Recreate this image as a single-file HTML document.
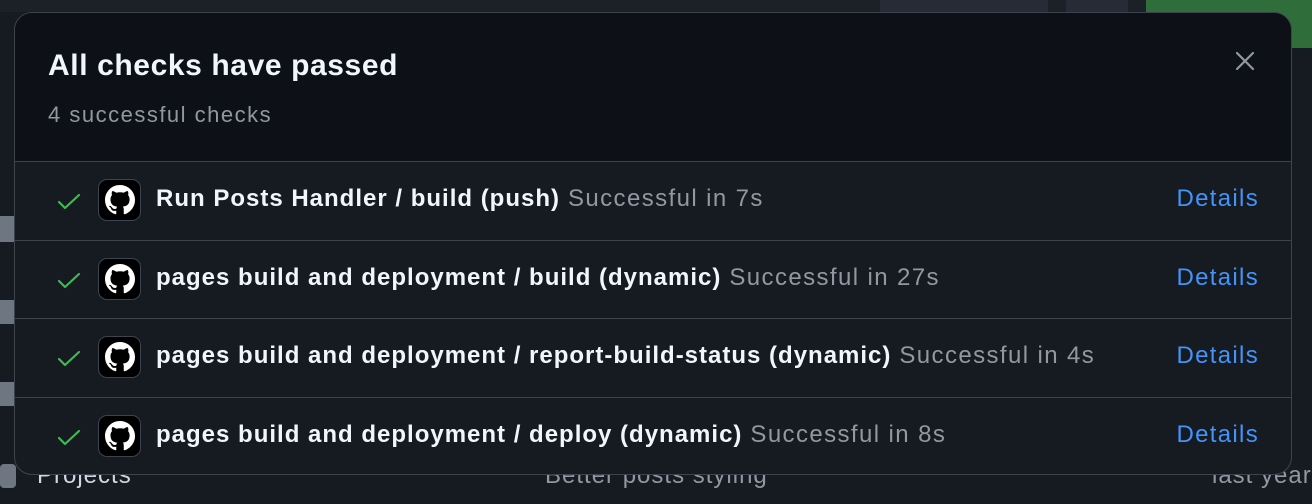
<!DOCTYPE html>
<html><head><meta charset="utf-8"><style>
*{margin:0;padding:0;box-sizing:border-box}
body{width:1312px;height:504px;overflow:hidden;background:#161b22;font-family:"Liberation Sans",sans-serif;position:relative}
.bg{position:absolute;letter-spacing:1px;white-space:nowrap}
.modal{position:absolute;left:14px;top:12px;width:1278px;height:463px;border:1.5px solid #3d444d;border-radius:18px;overflow:hidden;background:#161b22}
.head{height:149px;background:#0d1117;border-bottom:1.5px solid #3d444d;position:relative}
.title{position:absolute;left:33px;top:36px;font-size:30px;font-weight:bold;color:#f0f6fc;letter-spacing:0.6px}
.sub{position:absolute;left:33px;top:89px;font-size:22px;color:#9198a1;letter-spacing:1.5px}
.x{position:absolute;left:1220px;top:38px}
.row{height:78.5px;border-bottom:1.5px solid #3d444d;position:relative;font-size:24px}
.row:last-child{border-bottom:none}
.chk{position:absolute;left:41px;top:29px}
.ic{position:absolute;left:83px;top:17px;width:43px;height:42px;background:#000;border:1.5px solid #3d444d;border-radius:9px;display:flex;align-items:center;justify-content:center}
.nm{position:absolute;left:141px;top:23px;color:#f0f6fc;font-weight:bold;white-space:nowrap;letter-spacing:1px}
.nm span{color:#9198a1;font-weight:normal;margin-left:8px;letter-spacing:1.4px}
.det{position:absolute;right:32px;top:23px;color:#4493f8;letter-spacing:1.3px}
</style></head><body>
<div class="bg" style="left:0;top:0;width:1312px;height:12px;background:#1c2128"></div>
<div class="bg" style="left:880px;top:0;width:168px;height:12px;background:#262c36"></div>
<div class="bg" style="left:1066px;top:0;width:62px;height:12px;background:#262c36"></div>
<div class="bg" style="left:1146px;top:0;width:166px;height:48px;background:#2f6d3a"></div>
<div class="bg" style="left:0;top:216px;width:14px;height:26px;background:#6e7681"></div>
<div class="bg" style="left:0;top:300px;width:14px;height:24px;background:#6e7681"></div>
<div class="bg" style="left:0;top:382px;width:14px;height:24px;background:#6e7681"></div>
<div class="bg" style="left:0;top:464px;width:16px;height:24px;background:#6e7681;border-radius:4px"></div>
<div class="bg" style="left:37px;top:462px;font-size:24px;color:#d1d7e0">Projects</div>
<div class="bg" style="left:545px;top:462px;font-size:24px;color:#9198a1">Better posts styling</div>
<div class="bg" style="left:1212px;top:462px;font-size:24px;color:#9198a1">last year</div>
<div class="modal">
 <div class="head">
  <div class="title">All checks have passed</div>
  <div class="sub">4 successful checks</div>
  <svg class="x" width="20" height="20" viewBox="0 0 20 20"><path d="M2 2L18 18M18 2L2 18" stroke="#9198a1" stroke-width="2.2" stroke-linecap="round"/></svg>
 </div>
 <div class="rows">
 
 <div class="row"><svg class="chk" width="26" height="22" viewBox="0 0 26 22"><path d="M3 11L9 17L23 4" fill="none" stroke="#3fb950" stroke-width="2.2" stroke-linecap="round" stroke-linejoin="round"/></svg><div class="ic"><svg width="30" height="30" viewBox="0 0 16 16"><path fill="#fff" d="M8 0C3.58 0 0 3.58 0 8c0 3.54 2.29 6.53 5.47 7.590.4.07.55-.17.55-.38 0-.19-.01-.82-.01-1.49-2.01.37-2.53-.49-2.69-.94-.09-.23-.48-.94-.82-1.13-.28-.15-.68-.52-.01-.53.63-.01 1.08.58 1.23.82.72 1.21 1.87.87 2.33.66.07-.52.28-.87.51-1.07-1.78-.2-3.64-.89-3.64-3.95 0-.87.31-1.59.82-2.15-.08-.2-.36-1.02.08-2.12 0 0 .67-.21 2.2.82.64-.18 1.32-.27 2-.27.68 0 1.36.09 2 .27 1.53-1.04 2.2-.82 2.2-.82.44 1.1.16 1.92.08 2.12.51.56.82 1.27.82 2.15 0 3.07-1.87 3.75-3.65 3.95.29.25.54.73.54 1.48 0 1.07-.01 1.93-.01 2.2 0 .21.15.46.55.38A8.013 8.013 0 0016 8c0-4.42-3.58-8-8-8z"/></svg></div><div class="nm">Run Posts Handler / build (push)<span>Successful in 7s</span></div><div class="det">Details</div></div>
 
 <div class="row"><svg class="chk" width="26" height="22" viewBox="0 0 26 22"><path d="M3 11L9 17L23 4" fill="none" stroke="#3fb950" stroke-width="2.2" stroke-linecap="round" stroke-linejoin="round"/></svg><div class="ic"><svg width="30" height="30" viewBox="0 0 16 16"><path fill="#fff" d="M8 0C3.58 0 0 3.58 0 8c0 3.54 2.29 6.53 5.47 7.59.4.07.55-.17.55-.38 0-.19-.01-.82-.01-1.49-2.01.37-2.53-.49-2.69-.94-.09-.23-.48-.94-.82-1.13-.28-.15-.68-.52-.01-.53.63-.01 1.08.58 1.23.82.72 1.21 1.87.87 2.33.66.07-.52.28-.87.51-1.07-1.78-.2-3.64-.89-3.64-3.95 0-.87.31-1.59.82-2.15-.08-.2-.36-1.02.08-2.12 0 0 .67-.21 2.2.82.64-.18 1.32-.27 2-.27.68 0 1.36.09 2 .27 1.53-1.04 2.2-.82 2.2-.82.44 1.1.16 1.92.08 2.12.51.56.82 1.27.82 2.15 0 3.07-1.87 3.75-3.65 3.95.29.25.54.73.54 1.48 0 1.07-.01 1.93-.01 2.2 0 .21.15.46.55.38A8.013 8.013 0 0016 8c0-4.42-3.58-8-8-8z"/></svg></div><div class="nm">pages build and deployment / build (dynamic)<span>Successful in 27s</span></div><div class="det">Details</div></div>
 
 <div class="row"><svg class="chk" width="26" height="22" viewBox="0 0 26 22"><path d="M3 11L9 17L23 4" fill="none" stroke="#3fb950" stroke-width="2.2" stroke-linecap="round" stroke-linejoin="round"/></svg><div class="ic"><svg width="30" height="30" viewBox="0 0 16 16"><path fill="#fff" d="M8 0C3.58 0 0 3.58 0 8c0 3.54 2.29 6.53 5.47 7.59.4.07.55-.17.55-.38 0-.19-.01-.82-.01-1.49-2.01.37-2.53-.49-2.69-.94-.09-.23-.48-.94-.82-1.13-.28-.15-.68-.52-.01-.53.63-.01 1.08.58 1.23.82.72 1.21 1.87.87 2.33.66.07-.52.28-.87.51-1.07-1.78-.2-3.64-.89-3.64-3.95 0-.87.31-1.59.82-2.15-.08-.2-.36-1.02.08-2.12 0 0 .67-.21 2.2.82.64-.18 1.32-.27 2-.27.68 0 1.36.09 2 .27 1.53-1.04 2.2-.82 2.2-.82.44 1.1.16 1.92.08 2.12.51.56.82 1.27.82 2.15 0 3.07-1.87 3.75-3.65 3.95.29.25.54.73.54 1.48 0 1.07-.01 1.93-.01 2.2 0 .21.15.46.55.38A8.013 8.013 0 0016 8c0-4.42-3.58-8-8-8z"/></svg></div><div class="nm">pages build and deployment / report-build-status (dynamic)<span>Successful in 4s</span></div><div class="det">Details</div></div>
 
 <div class="row"><svg class="chk" width="26" height="22" viewBox="0 0 26 22"><path d="M3 11L9 17L23 4" fill="none" stroke="#3fb950" stroke-width="2.2" stroke-linecap="round" stroke-linejoin="round"/></svg><div class="ic"><svg width="30" height="30" viewBox="0 0 16 16"><path fill="#fff" d="M8 0C3.58 0 0 3.58 0 8c0 3.54 2.29 6.53 5.47 7.59.4.07.55-.17.55-.38 0-.19-.01-.82-.01-1.49-2.01.37-2.53-.49-2.69-.94-.09-.23-.48-.94-.82-1.13-.28-.15-.68-.52-.01-.53.63-.01 1.08.58 1.23.82.72 1.21 1.87.87 2.33.66.07-.52.28-.87.51-1.07-1.78-.2-3.64-.89-3.64-3.95 0-.87.31-1.59.82-2.15-.08-.2-.36-1.02.08-2.12 0 0 .67-.21 2.2.82.64-.18 1.32-.27 2-.27.68 0 1.36.09 2 .27 1.53-1.04 2.2-.82 2.2-.82.44 1.1.16 1.92.08 2.12.51.56.82 1.27.82 2.15 0 3.07-1.87 3.75-3.65 3.95.29.25.54.73.54 1.48 0 1.07-.01 1.93-.01 2.2 0 .21.15.46.55.38A8.013 8.013 0 0016 8c0-4.42-3.58-8-8-8z"/></svg></div><div class="nm">pages build and deployment / deploy (dynamic)<span>Successful in 8s</span></div><div class="det">Details</div></div>
 </div>
</div>
</body></html>
